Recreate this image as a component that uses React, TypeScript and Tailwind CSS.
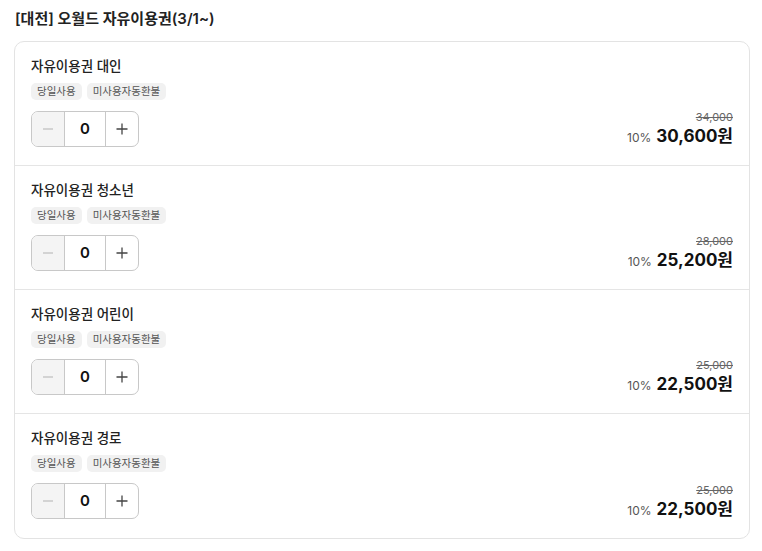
import React from "react";

const items = [
  { name: "자유이용권 대인", orig: "34,000", price: "30,600" },
  { name: "자유이용권 청소년", orig: "28,000", price: "25,200" },
  { name: "자유이용권 어린이", orig: "25,000", price: "22,500" },
  { name: "자유이용권 경로", orig: "25,000", price: "22,500" },
];

function Row({ item, last }: { item: (typeof items)[number]; last: boolean }) {
  return (
    <div className={`h-[124px] px-4 pt-[15px] flex justify-between ${last ? "" : "border-b border-[#e5e5e5]"}`}>
      <div className="flex flex-col">
        <div className="text-[13.5px] leading-[18px] font-medium text-[#222]">{item.name}</div>
        <div className="flex gap-[5px] mt-[8px]">
          <span className="h-[17px] px-[6px] rounded-[5px] bg-[#f1f1f1] text-[10.5px] leading-[17px] text-[#555]">당일사용</span>
          <span className="h-[17px] px-[6px] rounded-[5px] bg-[#f1f1f1] text-[10.5px] leading-[17px] text-[#555]">미사용자동환불</span>
        </div>
        <div className="mt-[11px] flex h-[36px] w-[108px] border border-[#c8c8c8] rounded-[7px] overflow-hidden">
          <div className="w-[33px] bg-[#f4f4f4] border-r border-[#c8c8c8] flex items-center justify-center">
            <svg width="12" height="12" viewBox="0 0 12 12"><path d="M1 6h10" stroke="#c8c8c8" strokeWidth="1.3" /></svg>
          </div>
          <div className="flex-1 flex items-center justify-center text-[15px] font-semibold text-[#111]">0</div>
          <div className="w-[33px] border-l border-[#c8c8c8] flex items-center justify-center">
            <svg width="12" height="12" viewBox="0 0 12 12"><path d="M0.5 6h11M6 0.5v11" stroke="#444" strokeWidth="1.3" /></svg>
          </div>
        </div>
      </div>
      <div className="flex flex-col items-end justify-end pb-[18px]">
        <div className="text-[11px] leading-[14px] text-[#666] line-through">{item.orig}</div>
        <div className="flex items-baseline mt-[1px]">
          <span className="text-[12px] text-[#555] mr-[5px]">10%</span>
          <span className="text-[17px] leading-[22px] font-bold text-[#111]">{item.price}원</span>
        </div>
      </div>
    </div>
  );
}

export default function App() {
  return (
    <div
      className="w-[762px] h-[551px] bg-white px-[14px] pt-[8px]"
      style={{ fontFamily: "Inter, 'Noto Sans CJK KR', sans-serif" }}
    >
      <div className="text-[15px] leading-[22px] font-semibold text-[#222] pl-px">[대전] 오월드 자유이용권(3/1~)</div>
      <div className="mt-[11px] w-[736px] border border-[#e3e3e3] rounded-[10px]">
        {items.map((it, i) => (
          <Row key={i} item={it} last={i === items.length - 1} />
        ))}
      </div>
    </div>
  );
}
